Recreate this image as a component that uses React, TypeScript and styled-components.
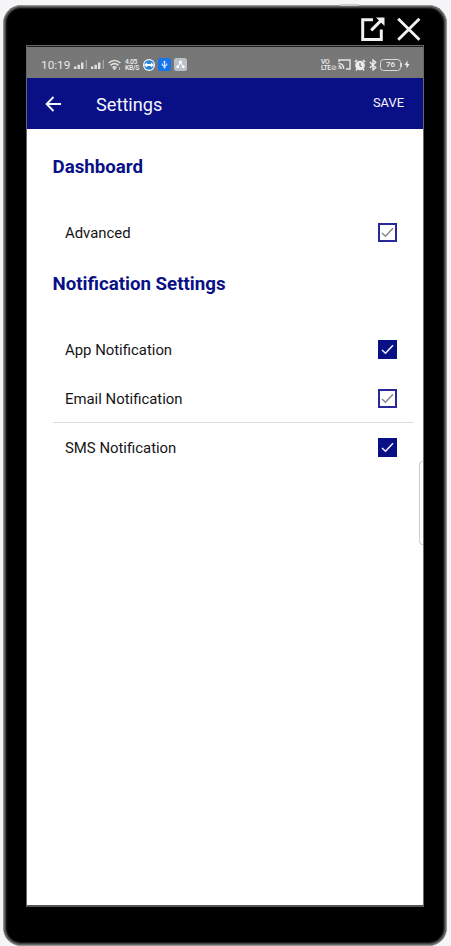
import React from "react";
import styled, { createGlobalStyle } from "styled-components";

const NAVY = "#091086";

const GlobalStyle = createGlobalStyle`
  * { box-sizing: border-box; }
  html, body { margin: 0; background: #f5f5f7; overflow: hidden; }
  body { font-family: Roboto, sans-serif; color: #151517; }
  button { font: inherit; color: inherit; background: none; border: 0; padding: 0; }
  svg { display: block; flex: none; }
`;

const Page = styled.main`
  height: 946px;
  width: 451px;
  padding: 5px 4px 0 3px;
  position: relative;
`;

const PowerButton = styled.i`
  position: absolute;
  left: 340px;
  top: 4px;
  width: 19px;
  height: 2px;
  background: #c9c9cb;
`;

const Phone = styled.div`
  height: 941px;
  border-radius: 18px;
  background: #000;
  border: 1px solid #929292;
  box-shadow: inset 0 0 0 1px #666, inset 0 0 0 2px #404040, inset 0 0 1px 3px #1a1a1a;
  padding: 0 22px;
  display: flex;
  flex-direction: column;
`;

const WindowBar = styled.div`
  height: 39px;
  display: flex;
  justify-content: flex-end;
  align-items: flex-start;
  gap: 12px;
  padding: 10px 3px 0 0;
`;

const Screen = styled.div`
  height: 862px;
  border: 1px solid #686868;
  border-bottom: 2px solid #555;
  background: #fff;
  display: flex;
  flex-direction: column;
  position: relative;
`;

const StatusBar = styled.div`
  height: 32px;
  border-top: 1px solid #1b1b1b;
  background: #777778;
  display: flex;
  align-items: center;
  justify-content: space-between;
  padding: 4px 13px 0 14px;
  color: #eee;
`;

const StatusGroup = styled.div<{ $gap: number }>`
  display: flex;
  align-items: center;
  gap: ${(p) => p.$gap}px;
`;

const Clock = styled.span`
  font-size: 11.8px;
  line-height: 14px;
  width: 30px;
  color: #e8e8e8;
`;

const Tiny = styled.span<{ $width: number }>`
  width: ${(p) => p.$width}px;
  font-size: 6.8px;
  line-height: 6px;
  font-weight: 500;
  letter-spacing: -0.35px;
  white-space: pre;
`;

const AppBar = styled.header`
  height: 51px;
  background: ${NAVY};
  color: #f5f5ff;
  display: flex;
  align-items: center;
  padding: 0 19px 0 18px;
`;

const Title = styled.h1`
  margin: 3px 0 0 34px;
  font-size: 18.2px;
  line-height: 24px;
  font-weight: 400;
  flex: 1;
`;

const Save = styled.button`
  && {
    font-size: 12.9px;
    line-height: 16px;
    margin-top: -2px;
  }
`;

const Content = styled.div`
  padding: 13px 9px 0 26px;
`;

const Heading = styled.h2`
  margin: 0 0 0 -0.5px;
  height: 50px;
  line-height: 50px;
  font-size: 18.7px;
  font-weight: 700;
  color: ${NAVY};
`;

const Group = styled.div<{ $top: number; $bottom: number }>`
  padding: ${(p) => p.$top}px 0 ${(p) => p.$bottom}px;
`;

const Row = styled.label<{ $divided?: boolean }>`
  height: 49px;
  display: flex;
  align-items: center;
  justify-content: space-between;
  padding: 0 17px 0 12px;
  font-size: 14.9px;
  border-bottom: 1px solid ${(p) => (p.$divided ? "#dcdcde" : "transparent")};
`;

const RowText = styled.span`
  padding-top: 2px;
`;

const Box = styled.span<{ $on: boolean }>`
  width: 19px;
  height: 19px;
  border: 2px solid ${(p) => (p.$on ? NAVY : "#28289a")};
  background: ${(p) => (p.$on ? NAVY : "#fff")};
  color: ${(p) => (p.$on ? "#f3f3ff" : "#88888a")};
  display: grid;
  place-items: center;
`;

const EdgeHandle = styled.i`
  position: absolute;
  right: 0;
  top: 415px;
  width: 4px;
  height: 84px;
  border: 1px solid #cfcfcf;
  border-right: 0;
  border-radius: 4px 0 0 4px;
`;

const Check = ({ on }: { on: boolean }) => (
  <Box $on={on}>
    <svg width="13" height="11" viewBox="0 0 13 11" fill="none" stroke="currentColor" strokeWidth="1.5">
      <path d="M1 6 4.5 9.3 12 1.2" />
    </svg>
  </Box>
);

const Setting = ({ name, on = false, divided = false }: { name: string; on?: boolean; divided?: boolean }) => (
  <Row $divided={divided}>
    <RowText>{name}</RowText>
    <Check on={on} />
  </Row>
);

const Signal = () => (
  <svg width="14" height="11" viewBox="0 0 14 11" fill="#e2e2e2">
    <path d="M0 7.5h2.4V10H0zM3.5 5.7h2.4V10H3.5zM7 3.5h2.4V10H7z" />
    <path d="M11.7 1h1.3v9h-1.3z" opacity=".45" />
  </svg>
);

const Wifi = () => (
  <svg width="14" height="12" viewBox="0 0 14 12" fill="none" stroke="#e2e2e2" strokeWidth="1.6">
    <path d="M.6 4Q6.5-1 12.4 4M2.5 6.4q4-3.4 8 0M4.5 8.6q2-1.6 4 0" />
    <path d="m5 9.3 1.5 1.6L8 9.3zM11.5 8.3v2.7" strokeWidth=".7" fill="#e2e2e2" />
  </svg>
);

const TransferIcon = () => (
  <svg width="12" height="12" viewBox="0 0 12 12">
    <circle cx="6" cy="6" r="6" fill="#f1f8ff" />
    <circle cx="6" cy="6" r="4.8" fill="#2886d8" />
    <path d="m.8 6 3.3-2.6v1.5h3.8V3.4L11.2 6 7.9 8.6V7.1H4.1v1.5z" fill="#fff" />
  </svg>
);

const UsbIcon = () => (
  <svg width="13" height="13" viewBox="0 0 13 13" fill="none">
    <rect width="13" height="13" rx="2.5" fill="#1675ed" />
    <path d="M6.5 3v7M4.3 5.4v1.3l2.2 2 2.2-2V5.4" stroke="#d5e8ff" strokeWidth="1.2" />
    <path d="m5.2 4.2 1.3-1.8 1.3 1.8z" fill="#e5f2ff" />
    <circle cx="6.5" cy="9.6" r=".9" fill="#e5f2ff" />
  </svg>
);

const NodesIcon = () => (
  <svg width="13" height="13" viewBox="0 0 13 13">
    <rect width="13" height="13" rx="2.5" fill="#bcc1c9" />
    <path d="m4 8.5 2.5-4L9 8.5" fill="none" stroke="#fff" />
    <g fill="#fff"><circle cx="6.5" cy="4" r="1.5" /><circle cx="3.7" cy="8.8" r="1.4" /><circle cx="9.3" cy="8.8" r="1.4" /></g>
  </svg>
);

const CastIcon = () => (
  <svg width="13" height="11" viewBox="0 0 13 11" fill="none" stroke="#e8e8e8" strokeWidth="1.4">
    <path d="M1 3V1h11v9H8M.5 4.5q5 0 5.3 5.5M.5 7q2.4.2 2.7 3" />
    <circle cx="1" cy="9.4" r=".6" fill="#e8e8e8" stroke="none" />
  </svg>
);

const AlarmIcon = () => (
  <svg width="12" height="12" viewBox="0 0 12 12" fill="none" stroke="#ededed">
    <circle cx="6" cy="6.5" r="4.8" fill="#ededed" stroke="none" />
    <path d="m.8 3 2.3-2M11.2 3 8.9 1M3 10l-1 1.5M9 10l1 1.5" strokeWidth="1.6" />
    <path d="M6 3.8v2.9l1.8 1" strokeWidth="1.2" stroke="#777778" />
  </svg>
);

const BluetoothIcon = () => (
  <svg width="8" height="12" viewBox="0 0 8 12" fill="none" stroke="#ededed" strokeWidth="1.3">
    <path d="m.8 3 6 5.7L4 11V1l2.8 2.3-6 5.7" />
  </svg>
);

const Battery = styled.span`
  position: relative;
  width: 21px;
  height: 12px;
  border: 1px solid #d9d9d9;
  border-radius: 3.5px;
  font-size: 8px;
  font-weight: 500;
  line-height: 10px;
  text-align: center;
  &::after {
    content: "";
    position: absolute;
    right: -2px;
    top: 3px;
    width: 1px;
    height: 4px;
    background: #d9d9d9;
  }
`;

const Bolt = () => (
  <svg width="6" height="9" viewBox="0 0 5 9" fill="#eee"><path d="M3 .5 0 5h2v3.5L5 4H3z" /></svg>
);

const BackIcon = () => (
  <svg width="17" height="16" viewBox="0 0 17 16" fill="none" stroke="currentColor" strokeWidth="1.9">
    <path d="M8.5 1 1.6 8l6.9 7M1.8 8H16" />
  </svg>
);

const OpenIcon = () => (
  <svg width="25" height="26" viewBox="0 0 25 26" fill="none" stroke="#f1f1f1">
    <path d="M13 3.7H2.7v19.8h18.6V13.5" strokeWidth="3" />
    <path d="m11.2 14.4 10-10" strokeWidth="3" />
    <path d="M16 1.5h8.5V10z" fill="#f1f1f1" stroke="none" />
  </svg>
);

const CloseIcon = () => (
  <svg width="24" height="26" viewBox="0 0 24 26" fill="none" stroke="#f1f1f1" strokeWidth="2.9">
    <path d="m1.2 2.7 21.2 21M22.4 2.7 1.2 23.7" />
  </svg>
);

export default function App() {
  return (
    <>
      <GlobalStyle />
      <Page>
        <PowerButton />
        <Phone>
          <WindowBar>
            <button aria-label="Open in new window"><OpenIcon /></button>
            <button aria-label="Close"><CloseIcon /></button>
          </WindowBar>
          <Screen>
            <StatusBar>
              <StatusGroup $gap={3}>
                <Clock>10:19</Clock>
                <Signal />
                <Signal />
                <Wifi />
                <Tiny $width={15}>{"4.05\nKB/S"}</Tiny>
                <TransferIcon />
                <UsbIcon />
                <NodesIcon />
              </StatusGroup>
              <StatusGroup $gap={3}>
                <Tiny $width={14}>{"VO\nLTE⊘"}</Tiny>
                <CastIcon />
                <AlarmIcon />
                <BluetoothIcon />
                <Battery>76</Battery>
                <Bolt />
              </StatusGroup>
            </StatusBar>
            <AppBar>
              <button aria-label="Back"><BackIcon /></button>
              <Title>Settings</Title>
              <Save>SAVE</Save>
            </AppBar>
            <Content>
              <Heading>Dashboard</Heading>
              <Group $top={16} $bottom={2}>
                <Setting name="Advanced" />
              </Group>
              <Heading>Notification Settings</Heading>
              <Group $top={16} $bottom={0}>
                <Setting name="App Notification" on />
                <Setting name="Email Notification" divided />
                <Setting name="SMS Notification" on />
              </Group>
            </Content>
            <EdgeHandle />
          </Screen>
        </Phone>
      </Page>
    </>
  );
}
